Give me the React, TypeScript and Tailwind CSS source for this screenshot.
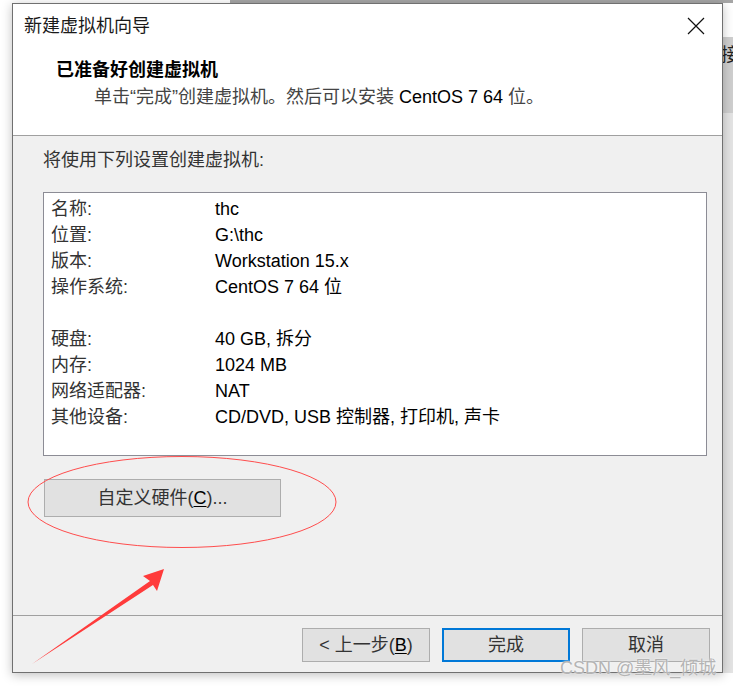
import React from 'react'

const rows: [string, string][] = [
  ['名称:', 'thc'],
  ['位置:', 'G:\\thc'],
  ['版本:', 'Workstation 15.x'],
  ['操作系统:', 'CentOS 7 64 位'],
  ['', ''],
  ['硬盘:', '40 GB, 拆分'],
  ['内存:', '1024 MB'],
  ['网络适配器:', 'NAT'],
  ['其他设备:', 'CD/DVD, USB 控制器, 打印机, 声卡'],
]

export default function App() {
  return (
    <div className="relative h-[686px] w-[733px] overflow-hidden bg-white font-['Liberation_Sans','Noto_Sans_CJK_SC',sans-serif] text-[18px] text-[#1a1a1a]">
      {/* desktop behind the window */}
      <div className="absolute left-[230px] top-0 h-[3px] w-[503px] bg-[#a6a6a6]" />
      <div className="absolute right-0 top-[37px] h-[76px] w-[20px] bg-[#cfcfcf] pl-[8px] pt-[6px] text-[18px] leading-[24px] text-[#222]">接</div>
      <div className="absolute right-0 top-[113px] h-[560px] w-[10px] bg-[#e4e4e4]" />

      {/* dialog */}
      <div className="relative ml-[12px] mt-[3px] flex w-[711px] flex-col border border-[#707070] shadow-[0_2px_10px_rgba(0,0,0,0.25)]">
        {/* header */}
        <div className="h-[132px] border-b border-[#a0a0a0] bg-white">
          <div className="flex items-center justify-between pl-[11px] pr-[16px] pt-[10px]">
            <span className="leading-[24px]">新建虚拟机向导</span>
            <svg width="18" height="18" viewBox="0 0 18 18" className="mr-[1px]">
              <path d="M1 1 L17 17 M17 1 L1 17" stroke="#111" strokeWidth="1.2" />
            </svg>
          </div>
          <div className="mt-[20px] pl-[43px] font-bold leading-[24px] text-black">已准备好创建虚拟机</div>
          <div className="mt-[3px] pl-[81px] leading-[24px] text-[#444]">
            单击“完成”创建虚拟机。然后可以安装 <span className="text-black">CentOS 7 64</span> 位。
          </div>
        </div>

        {/* body */}
        <div className="h-[479px] bg-[#f0f0f0] pl-[30px] pt-[12px]">
          <div className="leading-[24px] text-[#333]">将使用下列设置创建虚拟机:</div>
          <div className="mt-[20px] h-[264px] w-[664px] border border-[#8c8c95] bg-white pl-[7px] pt-[3px]">
            {rows.map(([label, value], i) => (
              <div key={i} className="flex h-[26px] items-center">
                <span className="w-[164px] text-[#333]">{label}</span>
                <span className="text-black">{value}</span>
              </div>
            ))}
          </div>
          <button className="ml-[1px] mt-[23px] flex h-[38px] w-[237px] items-center justify-center border border-[#adadad] bg-[#e1e1e1] text-[#333]">
            自定义硬件(<span className="underline underline-offset-2 text-black">C</span>)...
          </button>
        </div>

        {/* footer */}
        <div className="flex h-[57px] justify-end gap-[12px] border-t border-[#a0a0a0] bg-[#f0f0f0] pr-[12px] pt-[12px]">
          <button className="flex h-[34px] w-[128px] items-center justify-center border border-[#adadad] bg-[#e1e1e1] text-[#333]">
            &lt; 上一步(<span className="underline underline-offset-2 text-black">B</span>)
          </button>
          <button className="flex h-[34px] w-[128px] items-center justify-center border-2 border-[#0078d7] bg-[#e1e1e1] text-[#333]">
            完成
          </button>
          <button className="flex h-[34px] w-[128px] items-center justify-center border border-[#adadad] bg-[#e1e1e1] text-[#333]">
            取消
          </button>
        </div>
      </div>

      {/* red annotation */}
      <svg className="pointer-events-none absolute left-0 top-0" width="733" height="686">
        <ellipse cx="182" cy="502" rx="154" ry="45.5" fill="none" stroke="#ff4d4d" strokeWidth="1" />
        <polygon points="164,569 143,576 150,581 32,664 153,585 157,591" fill="#ff3b3b" />
      </svg>

      {/* watermark */}
      <div className="absolute left-[560px] top-[656px] text-[18px] leading-[24px] text-[#b4b4b4] [text-shadow:0_0_2px_#fff]">
        CSDN @墨风_倾城
      </div>
    </div>
  )
}
